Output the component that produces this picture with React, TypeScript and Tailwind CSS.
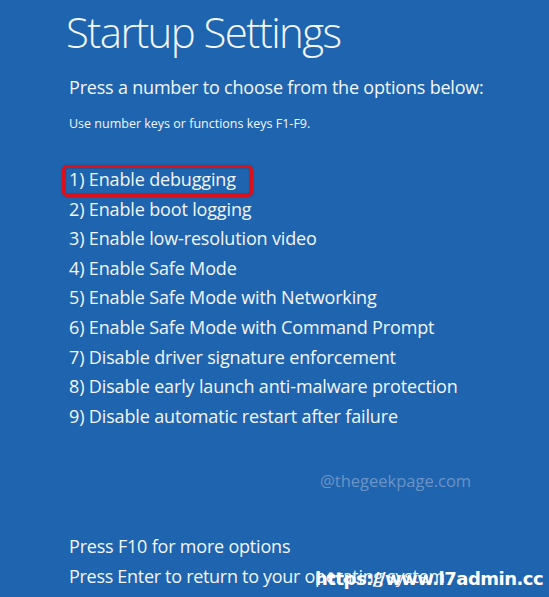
import React from "react";

const options = [
  "1) Enable debugging",
  "2) Enable boot logging",
  "3) Enable low-resolution video",
  "4) Enable Safe Mode",
  "5) Enable Safe Mode with Networking",
  "6) Enable Safe Mode with Command Prompt",
  "7) Disable driver signature enforcement",
  "8) Disable early launch anti-malware protection",
  "9) Disable automatic restart after failure",
];

export default function App() {
  return (
    <div className="relative w-[549px] h-[597px] overflow-hidden bg-[#1f64af] text-[#f2f6fb] font-['Open_Sans',sans-serif]">
      <div className="flex flex-col pl-[69px] pt-[3px]">
        <h1 className="-ml-[3px] text-[42px] font-light leading-[58px] tracking-[-1.6px]">Startup Settings</h1>
        <p className="mt-[11px] text-[18px] leading-[30px] tracking-[-0.2px]">Press a number to choose from the options below:</p>
        <p className="mt-[12px] text-[12.5px] leading-[20px]">Use number keys or functions keys F1-F9.</p>
        <ul className="mt-[31px] flex flex-col">
          {options.map((o, i) => (
            <li key={o} className="relative text-[18px] leading-[29.6px] tracking-[-0.15px]">
              {i === 0 && (
                <span className="absolute left-[-7px] top-[0px] w-[191px] h-[32px] rounded-[5px] border-[3px] border-[#dc101b] shadow-[inset_0_0_2px_rgba(0,0,0,0.4),0_0_2px_rgba(0,0,0,0.3)]" />
              )}
              {o}
            </li>
          ))}
        </ul>
        <div className="mt-[100px] flex flex-col">
          <p className="text-[18px] leading-[30px] tracking-[-0.2px]">Press F10 for more options</p>
          <p className="text-[18px] leading-[30px] tracking-[-0.3px]">Press Enter to return to your operating system</p>
        </div>
      </div>
      <div className="absolute left-[320px] top-[469px] text-[16.5px] leading-[24px] text-[#6b93c6]">@thegeekpage.com</div>
      <div className="absolute left-[315px] top-[568px] text-[18px] leading-[22px] font-bold text-white font-['DejaVu_Sans',sans-serif] tracking-[-0.5px]">https://www.l7admin.cc</div>
    </div>
  );
}
